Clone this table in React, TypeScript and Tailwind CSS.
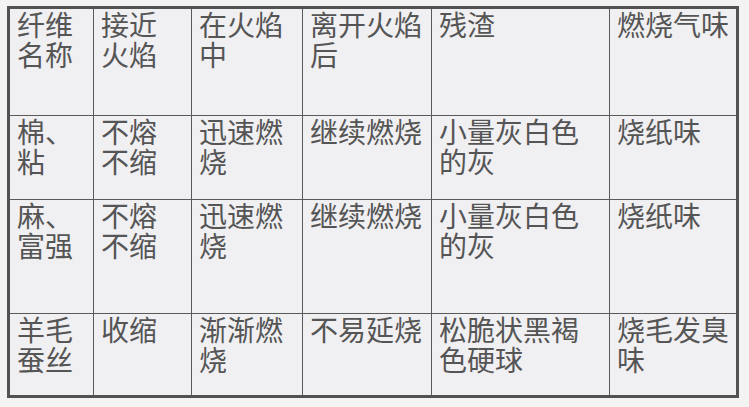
import React from "react";

const rows: string[][] = [
  ["纤维\n名称", "接近\n火焰", "在火焰\n中", "离开火焰\n后", "残渣", "燃烧气味"],
  ["棉、\n粘", "不熔\n不缩", "迅速燃\n烧", "继续燃烧", "小量灰白色\n的灰", "烧纸味"],
  ["麻、\n富强", "不熔\n不缩", "迅速燃\n烧", "继续燃烧", "小量灰白色\n的灰", "烧纸味"],
  ["羊毛\n蚕丝", "收缩", "渐渐燃\n烧", "不易延烧", "松脆状黑褐\n色硬球", "烧毛发臭\n味"],
];

export default function App() {
  return (
    <div className="w-[749px] h-[407px] bg-[#f3f3f3] pt-[6px] pl-[7px] overflow-hidden">
      <div
        className="w-[732px] h-[392px] border-[3px] border-[#525252] bg-[#f0eff2] grid grid-cols-[84px_98px_111px_129px_178px_126px] grid-rows-[107px_84px_114px_81px] text-[#555555] text-[28px] leading-[30px]"
        style={{ fontFamily: '"Noto Sans CJK SC", "Noto Sans", sans-serif' }}
      >
        {rows.map((row, ri) =>
          row.map((cell, ci) => (
            <div
              key={`${ri}-${ci}`}
              className={`whitespace-pre-line pt-0 pl-[7px] border-[#5a5a5a] ${ci < 5 ? "border-r" : ""} ${ri < 3 ? "border-b" : ""}`}
            >
              {cell}
            </div>
          ))
        )}
      </div>
    </div>
  );
}
